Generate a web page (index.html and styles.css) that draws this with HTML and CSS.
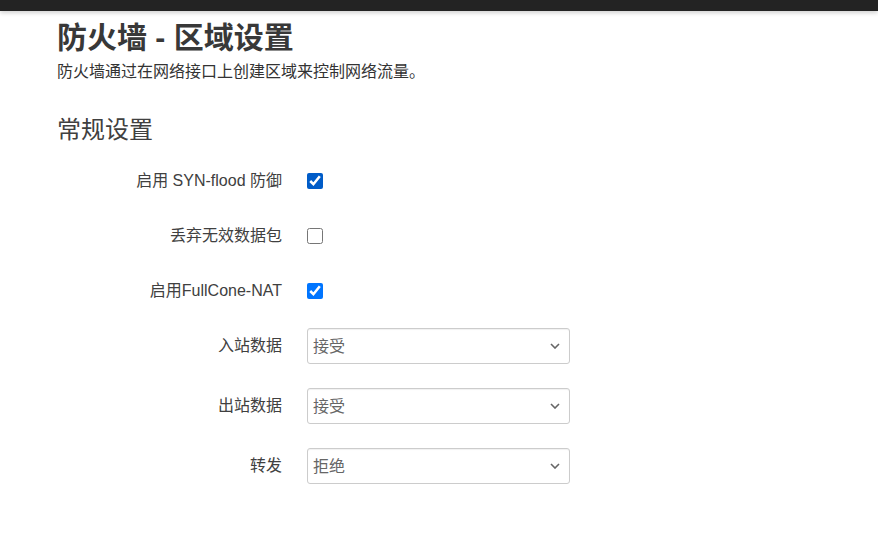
FILE: index.html
```html
<!DOCTYPE html>
<html lang="zh-CN">
<head>
<meta charset="utf-8">
<title>防火墙 - 区域设置</title>
<link rel="stylesheet" href="styles.css">
</head>
<body>
<header class="topbar"></header>
<main class="page">
  <h2 class="page-title">防火墙 - 区域设置</h2>
  <p class="page-desc">防火墙通过在网络接口上创建区域来控制网络流量。</p>
  <h3 class="section-title">常规设置</h3>
  <div class="form">
    <div class="row row-check">
      <label class="label" for="syn">启用 SYN-flood 防御</label>
      <input class="check check-hover" type="checkbox" id="syn" checked>
    </div>
    <div class="row row-check">
      <label class="label" for="drop">丢弃无效数据包</label>
      <input class="check" type="checkbox" id="drop">
    </div>
    <div class="row row-check">
      <label class="label" for="fc">启用FullCone-NAT</label>
      <input class="check" type="checkbox" id="fc" checked>
    </div>
    <div class="row row-select">
      <label class="label" for="in">入站数据</label>
      <select class="select" id="in"><option>接受</option><option>拒绝</option><option>丢弃</option></select>
    </div>
    <div class="row row-select">
      <label class="label" for="out">出站数据</label>
      <select class="select" id="out"><option>接受</option><option>拒绝</option><option>丢弃</option></select>
    </div>
    <div class="row row-select">
      <label class="label" for="fwd">转发</label>
      <select class="select" id="fwd"><option>拒绝</option><option>接受</option><option>丢弃</option></select>
    </div>
  </div>
</main>
</body>
</html>
```
FILE: styles.css
```css
html, body {
  margin: 0;
  padding: 0;
  background: #fff;
}
body {
  font-family: "Liberation Sans", "Noto Sans CJK SC", sans-serif;
  color: #333;
}
.topbar {
  height: 11px;
  background: #232323;
  box-shadow: 0 2px 4px rgba(0, 0, 0, 0.18);
}
.page {
  padding-left: 57px;
}
.page-title {
  margin: 9px 0 0;
  font-size: 30px;
  line-height: 36px;
  font-weight: bold;
  color: #383838;
}
.page-desc {
  margin: 6px 0 0;
  font-size: 16px;
  line-height: 20px;
  color: #333;
}
.section-title {
  margin: 33px 0 0;
  font-size: 24px;
  line-height: 30px;
  font-weight: normal;
  color: #404040;
}
.form {
  margin-top: 18px;
}
.row {
  display: flex;
  align-items: center;
  gap: 25px;
}
.row-check {
  height: 35px;
  margin-bottom: 20px;
}
.row-select {
  height: 36px;
  margin-bottom: 24px;
}
.label {
  width: 225px;
  text-align: right;
  font-size: 16px;
  line-height: 20px;
  color: #404040;
}
.check {
  width: 16px;
  height: 16px;
  margin: 0;
  accent-color: #0075ff;
}
.check-hover {
  accent-color: #005cc8;
}
.select {
  -webkit-appearance: none;
  appearance: none;
  width: 263px;
  height: 36px;
  margin: 0;
  padding: 0 24px 0 5px;
  border: 1px solid #ccc;
  border-radius: 3px;
  box-shadow: inset 0 1px 1px rgba(0, 0, 0, 0.06);
  background-color: #fff;
  background-image: url("data:image/svg+xml;utf8,<svg xmlns='http://www.w3.org/2000/svg' width='10' height='6' viewBox='0 0 10 6'><path d='M1 1l4 4 4-4' fill='none' stroke='%23666' stroke-width='1.6'/></svg>");
  background-repeat: no-repeat;
  background-position: right 9px center;
  font-family: "Liberation Sans", "Noto Sans CJK SC", sans-serif;
  font-size: 16px;
  color: #666;
}
```
